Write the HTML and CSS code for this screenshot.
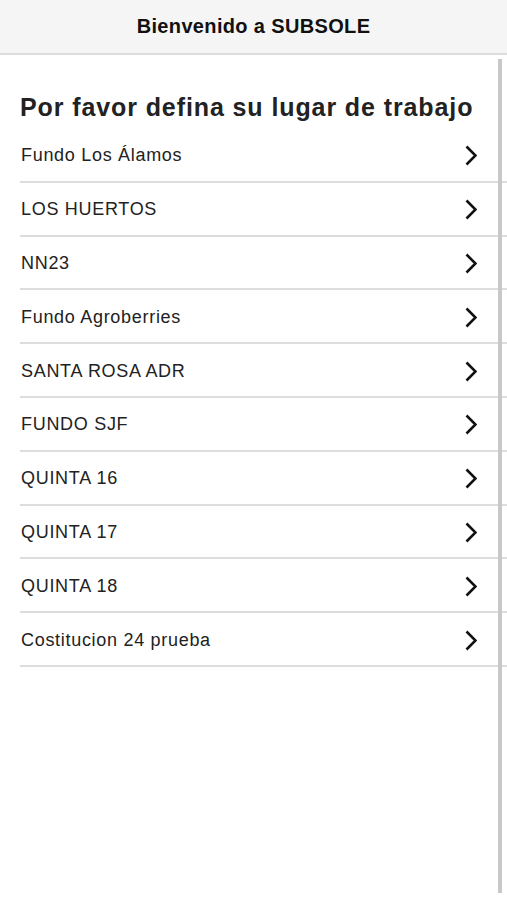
FILE: index.html
```html
<!DOCTYPE html>
<html>
<head>
    <meta charset="utf-8">
    <link rel="stylesheet" href="styles.css">
</head>
<body>
    <div class="barra">Bienvenido a SUBSOLE</div>
    <div class="contenido">
        <h1 class="titulo">Por favor defina su lugar de trabajo</h1>
        <ul class="lista">
            <li class="item"><span>Fundo Los Álamos</span><svg class="flecha" viewBox="0 0 12 21"><path d="M1.5 1.5 L10.5 10.5 L1.5 19.5"/></svg></li>
            <li class="item"><span>LOS HUERTOS</span><svg class="flecha" viewBox="0 0 12 21"><path d="M1.5 1.5 L10.5 10.5 L1.5 19.5"/></svg></li>
            <li class="item"><span>NN23</span><svg class="flecha" viewBox="0 0 12 21"><path d="M1.5 1.5 L10.5 10.5 L1.5 19.5"/></svg></li>
            <li class="item"><span>Fundo Agroberries</span><svg class="flecha" viewBox="0 0 12 21"><path d="M1.5 1.5 L10.5 10.5 L1.5 19.5"/></svg></li>
            <li class="item"><span>SANTA ROSA ADR</span><svg class="flecha" viewBox="0 0 12 21"><path d="M1.5 1.5 L10.5 10.5 L1.5 19.5"/></svg></li>
            <li class="item"><span>FUNDO SJF</span><svg class="flecha" viewBox="0 0 12 21"><path d="M1.5 1.5 L10.5 10.5 L1.5 19.5"/></svg></li>
            <li class="item"><span>QUINTA 16</span><svg class="flecha" viewBox="0 0 12 21"><path d="M1.5 1.5 L10.5 10.5 L1.5 19.5"/></svg></li>
            <li class="item"><span>QUINTA 17</span><svg class="flecha" viewBox="0 0 12 21"><path d="M1.5 1.5 L10.5 10.5 L1.5 19.5"/></svg></li>
            <li class="item"><span>QUINTA 18</span><svg class="flecha" viewBox="0 0 12 21"><path d="M1.5 1.5 L10.5 10.5 L1.5 19.5"/></svg></li>
            <li class="item"><span>Costitucion 24 prueba</span><svg class="flecha" viewBox="0 0 12 21"><path d="M1.5 1.5 L10.5 10.5 L1.5 19.5"/></svg></li>
        </ul>
        <div class="scroll"></div>
    </div>
</body>
</html>
```

FILE: styles.css
```css
body {
    margin: 0;
    font-family: "Liberation Sans", Arial, sans-serif;
    color: #222;
    background-color: #fff;
}

.barra {
    height: 53px;
    line-height: 53px;
    text-align: center;
    font-size: 20px;
    letter-spacing: 0.35px;
    font-weight: bold;
    color: #111;
    background-color: #f5f5f5;
    border-bottom: 2px solid #ddd;
}

.contenido {
    position: relative;
    height: 845px;
    padding-left: 20px;
}

.titulo {
    margin: 0;
    padding-top: 31px;
    line-height: 43px;
    font-size: 25px;
    letter-spacing: 0.9px;
    font-weight: bold;
    color: #222;
}

.lista {
    list-style: none;
    margin: 0;
    padding: 0;
}

.item {
    display: flex;
    align-items: center;
    justify-content: space-between;
    height: 49.8px;
    padding: 2px 30px 0 1px;
    border-bottom: 2px solid #ddd;
    font-size: 18px;
    letter-spacing: 0.7px;
}

.flecha {
    width: 12px;
    height: 21px;
    fill: none;
    stroke: #111;
    stroke-width: 2.6;
}

.scroll {
    position: absolute;
    top: 4px;
    right: 5px;
    width: 4px;
    height: 834px;
    background-color: #c8c8c8;
}
```
